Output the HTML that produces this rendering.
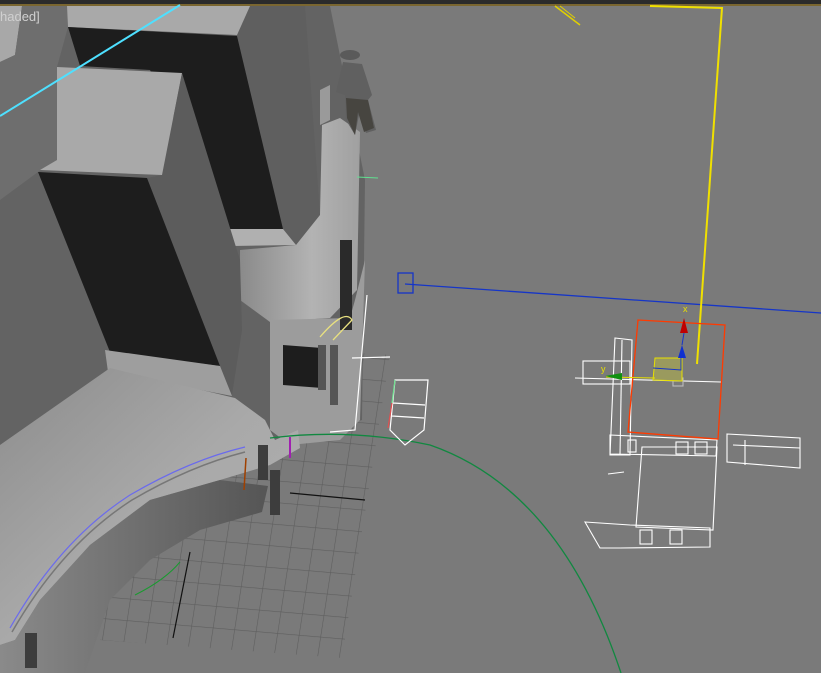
<!DOCTYPE html>
<html><head><style>
html,body{margin:0;padding:0;width:821px;height:673px;overflow:hidden;background:#7a7a7a}
svg{display:block}
.t{position:absolute;left:0;top:9px;font:13px "Liberation Sans",sans-serif;color:#d0d0d0}
</style></head><body>
<svg width="821" height="673" viewBox="0 0 821 673" xmlns="http://www.w3.org/2000/svg">
<defs>
<pattern id="g" width="21.5" height="21.5" patternUnits="userSpaceOnUse" patternTransform="matrix(1,0.085,-0.153,1,4,0)">
<path d="M0 0H21.5M0 0V21.5" stroke="#5e5e5e" stroke-width="1.2" fill="none"/>
</pattern>
<linearGradient id="cyl" x1="0" x2="1"><stop offset="0" stop-color="#8a8a8a"/><stop offset="0.6" stop-color="#b3b3b3"/><stop offset="1" stop-color="#a0a0a0"/></linearGradient>
<linearGradient id="arch" x1="0" y1="0" x2="1" y2="1"><stop offset="0" stop-color="#8c8c8c"/><stop offset="0.5" stop-color="#a9a9a9"/><stop offset="1" stop-color="#b0b0b0"/></linearGradient>
<linearGradient id="under" x1="0" x2="1"><stop offset="0" stop-color="#8a8a8a"/><stop offset="1" stop-color="#555"/></linearGradient>
</defs>
<rect width="821" height="673" fill="#7a7a7a"/>
<rect width="821" height="4" fill="#2b2b2b"/>
<rect y="4" width="821" height="2" fill="#7a6630"/>
<polygon points="100,335 390,355 342,658 100,640" fill="url(#g)"/>
<line x1="190" y1="552" x2="173" y2="638" stroke="#111" stroke-width="1.2"/>
<line x1="290" y1="493" x2="365" y2="500" stroke="#111" stroke-width="1.2"/>
<polygon points="0,6 330,6 365,180 362,420 290,445 0,460" fill="#636363"/>
<polygon points="0,6 22,6 15,55 0,62" fill="#a8a8a8"/>
<polygon points="15,55 22,6 67,6 68,27 57,67 57,160 38,172 0,200 0,62" fill="#6e6e6e"/>
<polygon points="237,35 250,6 305,6 320,215 296,245 283,229" fill="#5f5f5f"/>
<polygon points="67,6 250,6 237,35 68,27" fill="#a9a9a9"/>
<polygon points="68,27 237,36 283,229 228,229 150,70 80,66" fill="#1d1d1d"/>
<polygon points="228,229 283,229 296,245 232,246" fill="#b0b0b0"/>
<polygon points="240,250 296,245 320,215 322,125 340,118 360,132 357,290 330,318 270,322 240,300" fill="url(#cyl)"/>
<polygon points="320,90 330,85 330,120 320,125" fill="#9a9a9a"/>
<polygon points="147,178 162,175 182,73 240,260 242,330 232,395 220,368" fill="#5c5c5c"/>
<polygon points="57,67 182,73 162,175 40,170 57,160" fill="#a9a9a9"/>
<polygon points="38,172 147,178 220,366 110,352" fill="#1d1d1d"/>
<polygon points="105,350 220,366 232,396 108,372" fill="#9e9e9e"/>
<polygon points="270,320 350,318 355,300 365,260 360,420 340,440 290,445 270,430" fill="#9c9c9c"/>
<polygon points="283,345 322,348 322,388 283,385" fill="#1d1d1d"/>
<rect x="340" y="240" width="12" height="90" fill="#2a2a2a"/>
<rect x="318" y="345" width="8" height="45" fill="#555"/>
<rect x="330" y="345" width="8" height="60" fill="#555"/>
<polygon points="0,445 110,368 235,398 265,420 275,440 298,430 300,448 270,465 220,480 150,500 90,545 40,600 15,640 0,645" fill="url(#arch)"/>
<polygon points="15,640 40,600 90,545 150,500 220,480 268,486 262,512 200,530 150,560 110,600 85,673 0,673 0,645" fill="url(#under)"/>
<path d="M10 628 Q60 540 130 495 Q190 460 245 447" stroke="#6a6aee" stroke-width="1.2" fill="none"/>
<path d="M12 632 Q62 545 132 500 Q190 466 245 452" stroke="#777" stroke-width="1.5" fill="none"/>
<rect x="258" y="445" width="10" height="35" fill="#3d3d3d"/>
<rect x="270" y="470" width="10" height="45" fill="#3d3d3d"/>
<rect x="25" y="633" width="12" height="35" fill="#3d3d3d"/>
<ellipse cx="350" cy="55" rx="10" ry="5" fill="#5a5a5a"/>
<path d="M343 62 L362 64 L372 95 L368 100 L376 130 L366 133 L360 110 L355 135 L346 120 L345 95 L336 92 Z" fill="#606060"/>
<path d="M346 98 L368 100 L374 128 L364 132 L358 112 L355 135 L347 118 Z" fill="#474540"/>
<line x1="0" y1="116" x2="180" y2="5" stroke="#4ee0ff" stroke-width="2"/>
<line x1="405" y1="284" x2="821" y2="313" stroke="#1535c8" stroke-width="1.3"/>
<rect x="398" y="273" width="15" height="20" fill="none" stroke="#1535c8" stroke-width="1.3"/>
<polyline points="650,6 722,8 697,364" stroke="#f0e000" stroke-width="2" fill="none"/>
<line x1="555" y1="6" x2="580" y2="25" stroke="#e0d000" stroke-width="1.5"/>
<line x1="560" y1="6" x2="575" y2="18" stroke="#e0d000" stroke-width="1"/>
<line x1="357" y1="177" x2="378" y2="178" stroke="#60e090" stroke-width="1"/>
<path d="M320 337 Q345 308 352 320 L333 340" stroke="#e8e080" stroke-width="1.3" fill="none"/>
<line x1="246" y1="458" x2="244" y2="490" stroke="#a04000" stroke-width="1.5"/>
<line x1="290" y1="437" x2="290" y2="458" stroke="#a020b0" stroke-width="2"/>
<path d="M135 595 Q165 580 180 562" stroke="#1a9a30" stroke-width="1" fill="none"/>
<path d="M270 438 Q350 428 430 445 Q560 490 621 673" stroke="#118840" stroke-width="1.3" fill="none"/>
<path d="M367 295 L355 430 L330 432" stroke="#fff" stroke-width="1.2" fill="none"/>
<polyline points="352,358 390,357" stroke="#fff" stroke-width="1.2" fill="none"/>
<path d="M395 380 L428 380 L424 430 L405 445 L390 430 Z M393 403 L425 405 M392 416 L424 418" stroke="#fff" stroke-width="1.2" fill="none"/>
<line x1="395" y1="380" x2="392" y2="403" stroke="#70e090" stroke-width="1.2"/>
<line x1="392" y1="403" x2="388" y2="428" stroke="#e05050" stroke-width="1.2"/>
<g stroke="#fff" stroke-width="1.1" fill="none">
<line x1="575" y1="378" x2="721" y2="382"/>
<rect x="583" y="361" width="47" height="23"/>
<polygon points="615,338 632,340 630,455 610,455"/>
<line x1="622" y1="340" x2="620" y2="455"/>
<polygon points="610,435 717,440 716,456 610,454"/>
<rect x="628" y="440" width="8" height="12"/>
<rect x="676" y="442" width="12" height="12"/>
<rect x="695" y="442" width="12" height="12"/>
<polygon points="642,447 717,447 713,530 636,527"/>
<polygon points="585,522 630,525 710,528 710,547 620,548 600,548"/>
<rect x="640" y="530" width="12" height="14"/>
<rect x="670" y="530" width="12" height="14"/>
<polygon points="727,434 800,438 800,468 727,462"/>
<line x1="733" y1="445" x2="800" y2="448"/>
<line x1="745" y1="440" x2="745" y2="465"/>
<line x1="608" y1="474" x2="624" y2="472"/>
<rect x="673" y="378" width="10" height="8" stroke="#bbb"/>
</g>
<polygon points="638,320 725,325 718,439 628,432" fill="none" stroke="#ff3a00" stroke-width="1.3"/>
<polygon points="655,358 682,358 682,381 653,380" fill="#9a9a5e" stroke="#e8e000" stroke-width="1"/>
<polyline points="653,368 681,370 681,358" stroke="#1535c8" stroke-width="1" fill="none"/>
<line x1="606" y1="377" x2="655" y2="378" stroke="#e8e000" stroke-width="1"/>
<polygon points="684,318 688,333 680,333" fill="#c00000"/>
<line x1="684" y1="333" x2="682" y2="345" stroke="#1535c8" stroke-width="1"/>
<polygon points="682,345 686,358 678,358" fill="#1030d0"/>
<polygon points="605,376 622,373 622,380" fill="#109010"/>
<text x="683" y="312" font-family="Liberation Sans" font-size="9" fill="#e8e000">x</text>
<text x="601" y="372" font-family="Liberation Sans" font-size="9" fill="#e8e000">y</text>
</svg>
<div class="t">haded]</div>
</body></html>
